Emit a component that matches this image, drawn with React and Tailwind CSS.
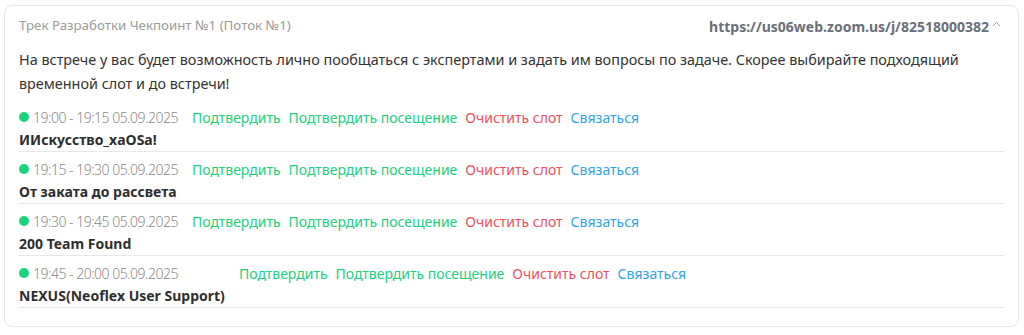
import React from "react";

const slots = [
  { time: "19:00 - 19:15 05.09.2025", team: "ИИскусство_xaOSa!", pad: "ml-[14px]" },
  { time: "19:15 - 19:30 05.09.2025", team: "От заката до рассвета", pad: "ml-[14px]" },
  { time: "19:30 - 19:45 05.09.2025", team: "200 Team Found", pad: "ml-[14px]" },
  { time: "19:45 - 20:00 05.09.2025", team: "NEXUS(Neoflex User Support)", pad: "ml-[61px]" },
];

const SlotRow = ({ slot }) => {
  return (
    <div className="border-b border-[#e8e8e8] pt-[7px] pb-[1px]">
      <div className="flex items-center h-[20px] text-[14px]">
        <span className="w-[10px] h-[10px] rounded-full bg-[#1cd37c] mr-[4px]" />
        <span className="text-[14px] tracking-[-0.5px] text-[#8a8a8a] font-light">{slot.time}</span>
        <div className={`flex items-center gap-[8px] ${slot.pad}`}>
          <span className="text-[#20d17e]">Подтвердить</span>
          <span className="text-[#20d17e]">Подтвердить посещение</span>
          <span className="text-[#f0505c]">Очистить слот</span>
          <span className="text-[#2ea6ea]">Связаться</span>
        </div>
      </div>
      <div className="text-[14px] font-bold text-[#2e2e2e] h-[20px] leading-[20px] mt-[3px]">
        {slot.team}
      </div>
    </div>
  );
};

export default function App() {
  return (
    <div className="w-[1024px] h-[335px] bg-white p-[4px] pt-[5px] font-['Noto_Sans',sans-serif]">
      <div className="w-[1015px] h-[322px] border border-[#e6e6e6] rounded-[8px] px-[14px] pt-[10px]">
        <div className="flex items-center justify-between h-[20px] pr-[3px]">
          <span className="text-[13.3px] text-[#9a9a9a]">Трек Разработки Чекпоинт №1 (Поток №1)</span>
          <span className="flex items-center text-[14px] font-bold text-[#6b6f78]">
            https://us06web.zoom.us/j/82518000382
            <svg className="ml-[3px] mb-[4px]" width="9" height="6" viewBox="0 0 9 6" fill="none">
              <path d="M1 5 L4.5 1.5 L8 5" stroke="#a0a0a0" strokeWidth="1" />
            </svg>
          </span>
        </div>
        <p className="mt-[12px] text-[14.4px] leading-[24px] text-[#333333]">
          На встрече у вас будет возможность лично пообщаться с экспертами и задать им вопросы по задаче. Скорее выбирайте подходящий
          <br />
          временной слот и до встречи!
        </p>
        <div className="mt-[4px]">
          {slots.map((s) => (
            <SlotRow key={s.time} slot={s} />
          ))}
        </div>
      </div>
    </div>
  );
}
